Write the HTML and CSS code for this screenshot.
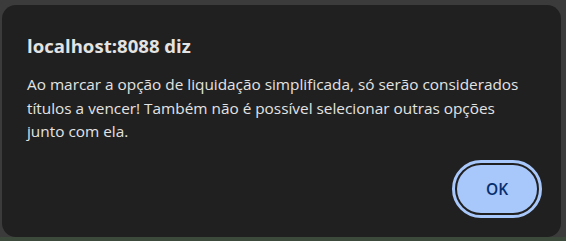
FILE: index.html
```html
<!DOCTYPE html>
<html lang="pt-BR">
<head>
<meta charset="utf-8">
<title>localhost:8088 diz</title>
<link rel="stylesheet" href="styles.css">
</head>
<body>
<div class="page">
  <div class="dialog" role="alertdialog">
    <h1 class="title">localhost:8088 diz</h1>
    <p class="message">Ao marcar a opção de liquidação simplificada, só serão considerados<br>títulos a vencer! Também não é possível selecionar outras opções<br>junto com ela.</p>
    <div class="actions">
      <button class="ok" type="button">OK</button>
    </div>
  </div>
</div>
</body>
</html>
```

FILE: styles.css
```css
html, body {
  margin: 0;
  padding: 0;
}
body {
  width: 566px;
  height: 241px;
  overflow: hidden;
  background: linear-gradient(to bottom, #3b3b3b 0, #3b3b3b 237px, #3c4a3c 237px, #3c4a3c 241px);
  font-family: "Open Sans", "Noto Sans", "DejaVu Sans", sans-serif;
}
.page {
  padding: 5px 0 0 2px;
}
.dialog {
  box-sizing: border-box;
  width: 559px;
  height: 232px;
  background: #202020;
  border-radius: 14px;
  padding: 29px 24px 0 25px;
  display: flex;
  flex-direction: column;
}
.title {
  margin: 0;
  font-size: 18.6px;
  line-height: 24px;
  font-weight: 700;
  color: #e3e3e3;
}
.message {
  margin: 15px 0 0 0;
  font-size: 15.35px;
  line-height: 23.5px;
  color: #e3e3e3;
}
.actions {
  display: flex;
  justify-content: flex-end;
  margin-top: 21px;
}
.ok {
  width: 80px;
  height: 48px;
  border: 0;
  border-radius: 24px;
  background: #a8c7fa;
  color: #062e6f;
  font-family: inherit;
  font-size: 15.5px;
  font-weight: 600;
  outline: 3px solid #a8c7fa;
  outline-offset: 2px;
  padding: 0;
}
```
